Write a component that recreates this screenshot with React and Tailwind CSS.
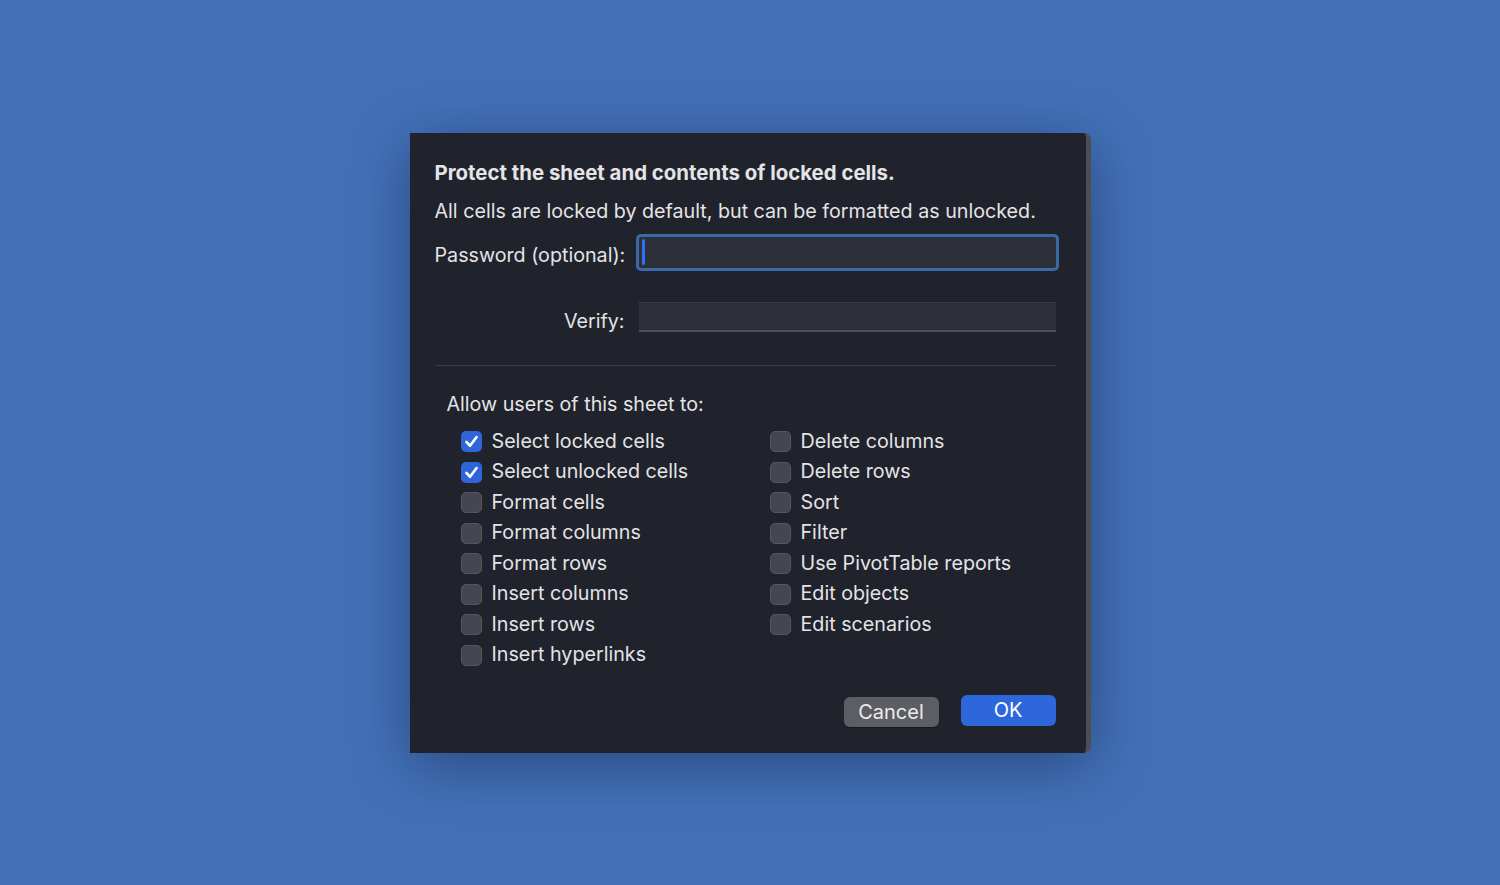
import React from 'react';

const leftItems = [
  { label: 'Select locked cells', checked: true },
  { label: 'Select unlocked cells', checked: true },
  { label: 'Format cells' },
  { label: 'Format columns' },
  { label: 'Format rows' },
  { label: 'Insert columns' },
  { label: 'Insert rows' },
  { label: 'Insert hyperlinks' },
];

const rightItems = [
  { label: 'Delete columns' },
  { label: 'Delete rows' },
  { label: 'Sort' },
  { label: 'Filter' },
  { label: 'Use PivotTable reports' },
  { label: 'Edit objects' },
  { label: 'Edit scenarios' },
];

const Check = ({ label, checked }) => (
  <div className="flex h-[30.5px] items-center">
    {checked ? (
      <div className="flex h-[21px] w-[21px] items-center justify-center rounded-[5px] bg-[#2f65d9]">
        <svg width="17" height="17" viewBox="0 0 16 16" fill="none">
          <path d="M3.2 8.4 L6.6 12 L12.8 3.8" stroke="white" strokeWidth="2.5" strokeLinecap="round" strokeLinejoin="round" />
        </svg>
      </div>
    ) : (
      <div className="h-[21px] w-[21px] rounded-[5px] border border-[#55565e] bg-[#45464f]" />
    )}
    <span className="ml-[10px] whitespace-nowrap">{label}</span>
  </div>
);

const App = () => {
  return (
    <div
      className="flex h-screen w-full items-center justify-center bg-[#4371b8] text-[19.7px] text-[#e4e4e6]"
      style={{ fontFamily: 'Inter, "Noto Sans", sans-serif' }}
    >
      <div className="w-[681px] rounded-r-[7px] border-r-[5px] border-[#4d4e54] bg-[#20222c] pl-[25px] pr-[27px] pt-[28px] pb-[26px] shadow-[0_12px_60px_rgba(10,25,60,0.45)]">
        {/* Header text */}
        <h1 className="whitespace-nowrap text-[20.4px] font-bold leading-[24px]">Protect the sheet and contents of locked cells.</h1>
        <p className="mt-[14px] whitespace-nowrap leading-[24px]">All cells are locked by default, but can be formatted as unlocked.</p>

        {/* Password fields */}
        <div className="mt-[14px] flex items-center">
          <span className="mt-[5px] w-[190px] whitespace-nowrap text-right leading-[24px]">Password (optional):</span>
          <div className="ml-[14px] flex h-[31px] w-[417px] items-center rounded-[2px] bg-[#2c2e39] pl-[3px] shadow-[0_0_0_3px_#3a6aa5]">
            <div className="h-[26px] w-[3px] rounded-full bg-[#2c73f2]" />
          </div>
        </div>
        <div className="mt-[34px] flex">
          <span className="w-[190px] pt-[7px] text-right leading-[24px]">Verify:</span>
          <div className="ml-[14px] h-[30px] w-[417px] border-t border-b-2 border-t-[#3a3c46] border-b-[#4a4c56] bg-[#2c2e39]" />
        </div>

        <div className="mr-[2px] mt-[32px] h-px bg-[#393b45]" />

        {/* Permissions */}
        <p className="mt-[26px] pl-[12px] leading-[24px]">Allow users of this sheet to:</p>
        <div className="mt-[11px] flex pl-[26px]">
          <div className="w-[309px]">
            {leftItems.map((item) => (
              <Check key={item.label} {...item} />
            ))}
          </div>
          <div>
            {rightItems.map((item) => (
              <Check key={item.label} {...item} />
            ))}
          </div>
        </div>

        {/* Buttons */}
        <div className="mt-[24px] flex items-end justify-end gap-[22px] pr-[3px]">
          <button className="h-[30px] w-[95px] rounded-[6px] bg-[#5d5e63] text-[20px] leading-none text-[#ececec] shadow-[0_1px_1px_rgba(0,0,0,0.3)]">
            Cancel
          </button>
          <button className="mb-px h-[31px] w-[95px] rounded-[6px] bg-[#2e66dc] text-[20px] leading-none text-white">
            OK
          </button>
        </div>
      </div>
    </div>
  );
};

export default App;
